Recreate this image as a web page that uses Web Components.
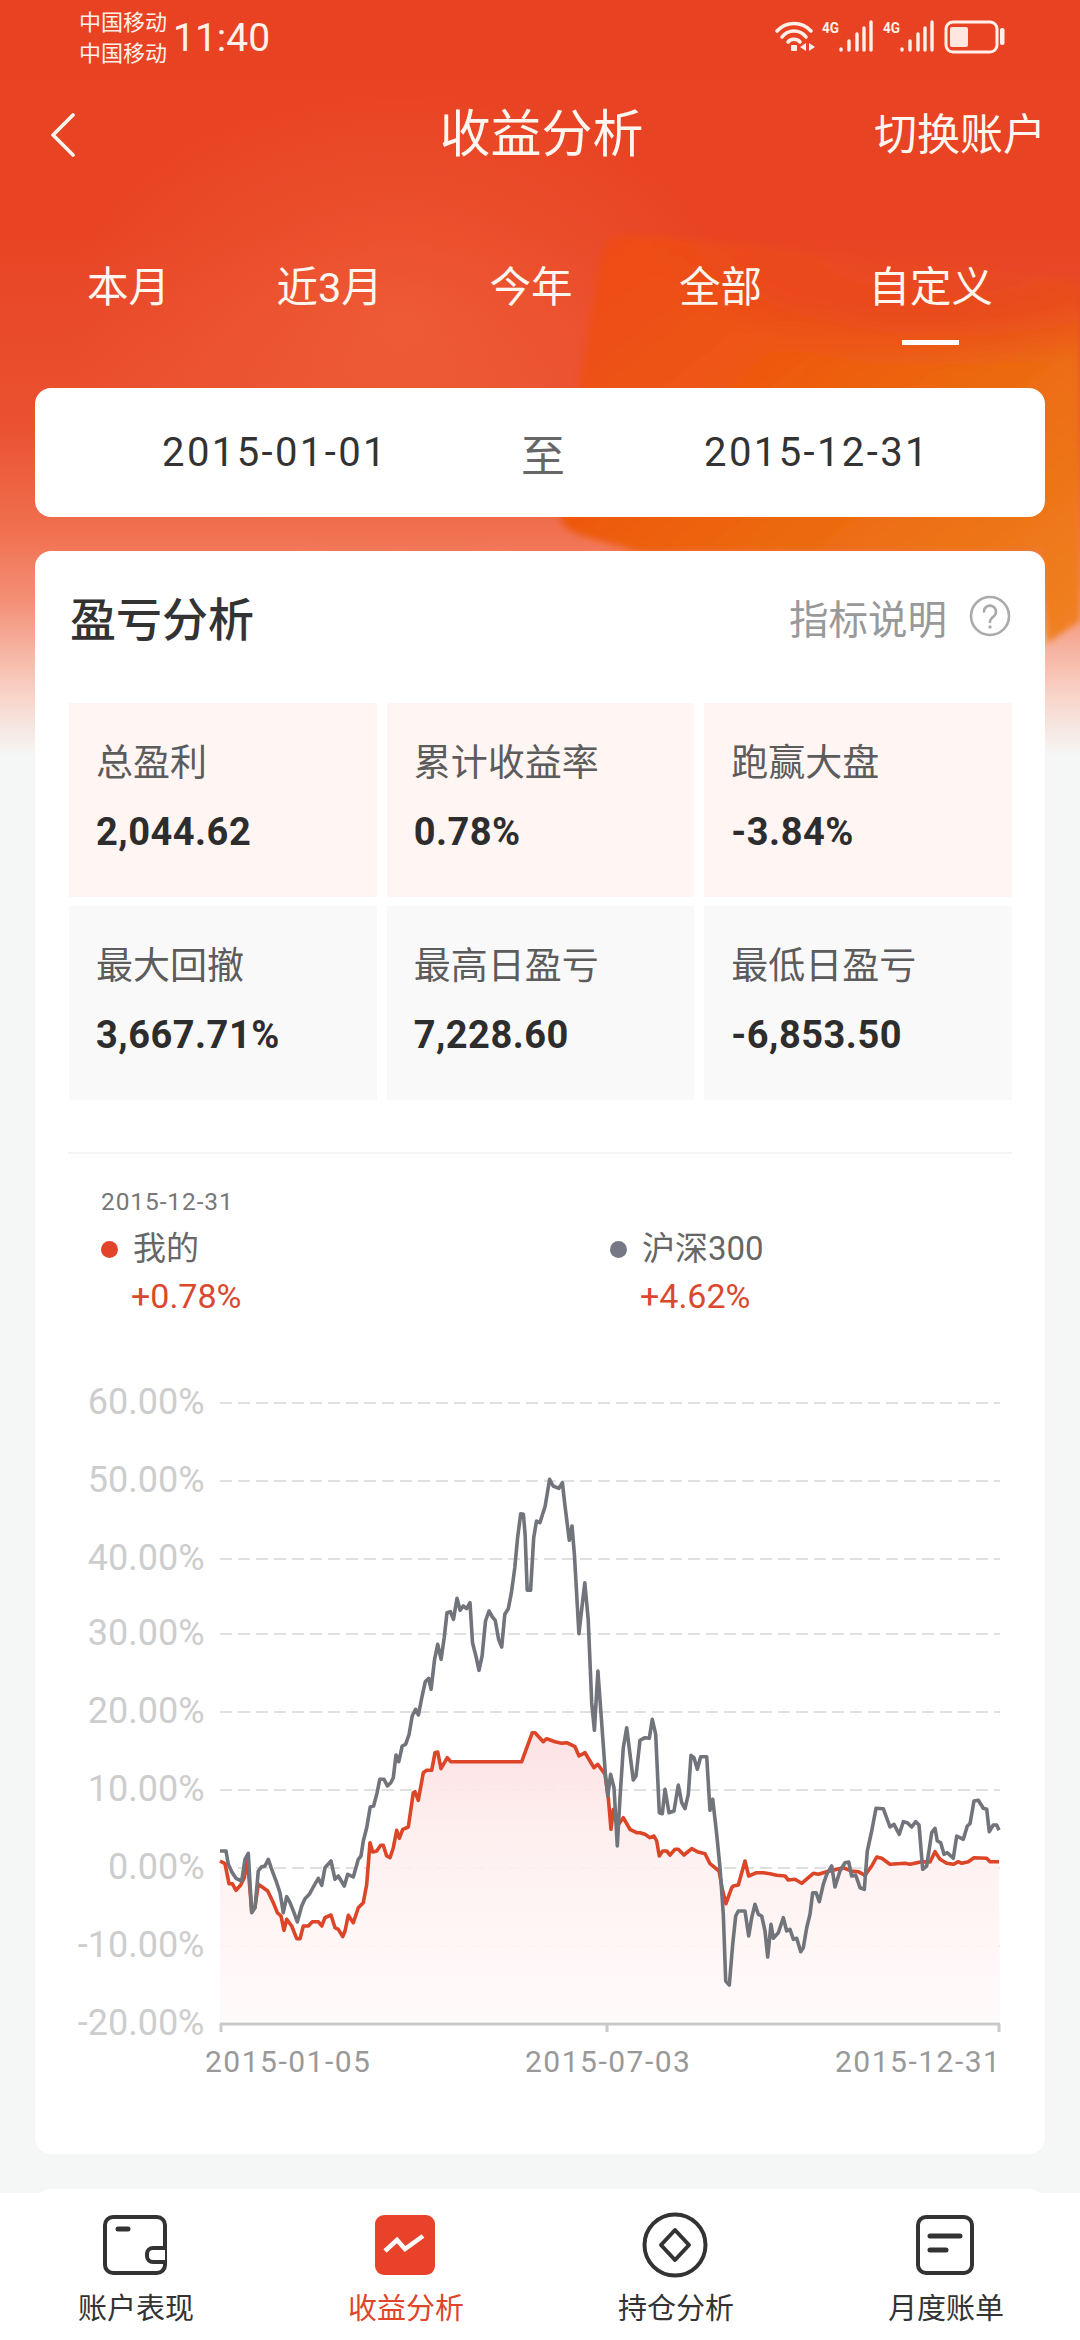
<!DOCTYPE html>
<html lang="zh-CN">
<head>
<meta charset="utf-8">
<title>收益分析</title>
<style>
html,body{margin:0;padding:0;background:#f5f6f6}
body{font-family:Roboto,"Noto Sans CJK SC",sans-serif;color:#333}
</style>
</head>
<body>
<app-page>
  <hero-backdrop slot="backdrop"></hero-backdrop>
  <status-bar></status-bar>
  <nav-bar title-text="收益分析" action="切换账户"></nav-bar>
  <range-tabs></range-tabs>
  <date-range from="2015-01-01" to="2015-12-31"></date-range>
  <analysis-card>
    <stat-grid></stat-grid>
    <chart-legend></chart-legend>
    <profit-chart></profit-chart>
  </analysis-card>
  <next-card></next-card>
  <tab-bar slot="footer"></tab-bar>
</app-page>

<script>
function shadow(el, html){ el.attachShadow({mode:'open'}).innerHTML = html; }

customElements.define('app-page', class extends HTMLElement{
  constructor(){ super(); shadow(this,`<style>
    :host{display:flex;flex-direction:column;position:relative;width:1080px;height:2340px;overflow:hidden;background:#f5f6f6}
    .content{position:relative;flex:1;min-height:0;overflow:hidden;display:flex;flex-direction:column}
    .footer{position:relative;flex:none}
  </style>
  <slot name="backdrop"></slot>
  <div class="content"><slot></slot></div>
  <div class="footer"><slot name="footer"></slot></div>`); }
});

customElements.define('hero-backdrop', class extends HTMLElement{
  constructor(){ super(); shadow(this,`<style>
    :host{display:block;position:absolute;left:0;top:0;width:1080px;height:770px}
    svg{display:block}
  </style>
  <svg width="1080" height="770" viewBox="0 0 1080 770">
    <defs>
      <linearGradient id="base" x1="0" y1="0" x2="0" y2="1">
        <stop offset="0" stop-color="#e84223"/>
        <stop offset=".3" stop-color="#e84424"/>
        <stop offset=".55" stop-color="#ea5130"/>
        <stop offset=".69" stop-color="#f0704f"/>
        <stop offset=".78" stop-color="#f48f76"/>
        <stop offset=".9" stop-color="#f8d2c6"/>
        <stop offset=".98" stop-color="#f5f6f6"/>
        <stop offset="1" stop-color="#f5f6f6"/>
      </linearGradient>
      <linearGradient id="or" x1="0" y1="0" x2="1" y2="1">
        <stop offset="0" stop-color="#ee4a18"/>
        <stop offset=".3" stop-color="#ee5412"/>
        <stop offset=".6" stop-color="#ec6a10"/>
        <stop offset="1" stop-color="#f08222"/>
      </linearGradient>
      <radialGradient id="glow" cx=".5" cy=".5" r=".5">
        <stop offset="0" stop-color="#f36a42" stop-opacity=".5"/>
        <stop offset="1" stop-color="#f36a42" stop-opacity="0"/>
      </radialGradient>
      <radialGradient id="redfade" cx=".5" cy=".5" r=".5">
        <stop offset="0" stop-color="#e84424" stop-opacity=".95"/>
        <stop offset=".6" stop-color="#e84424" stop-opacity=".7"/>
        <stop offset="1" stop-color="#e84424" stop-opacity="0"/>
      </radialGradient>
      <filter id="soft" x="-5%" y="-5%" width="110%" height="110%"><feGaussianBlur stdDeviation="3"/></filter>
      <clipPath id="shape"><path d="M628 235Q606 233 600 262L560 505Q554 530 590 538L640 552H1040L1047 643L1080 621V282L757 246Z"/></clipPath>
    </defs>
    <rect width="1080" height="770" fill="url(#base)"/>
    <ellipse cx="400" cy="320" rx="330" ry="240" fill="url(#glow)"/>
    <g filter="url(#soft)">
      <path d="M628 235Q606 233 600 262L560 505Q554 530 590 538L640 552H1040L1047 643L1080 621V282L757 246Z" fill="url(#or)"/>
      <g clip-path="url(#shape)"><ellipse cx="960" cy="240" rx="320" ry="130" fill="url(#redfade)"/></g>
    </g>
  </svg>`); }
});

customElements.define('status-bar', class extends HTMLElement{
  constructor(){ super(); shadow(this,`<style>
    :host{display:flex;align-items:center;height:76px;padding-left:79px;color:#fff1ea;flex:none}
    .carrier{display:flex;flex-direction:column;font-size:22px;line-height:31px;padding-bottom:5px;font-family:"Noto Sans CJK SC",sans-serif}
    .time{font-size:39px;margin-left:6px;font-family:Roboto,sans-serif;line-height:44px}
    svg{margin-left:auto;margin-right:67px;display:block}
    text{font:700 14px Roboto,sans-serif;fill:#fff1ea}
  </style>
  <div class="carrier"><span>中国移动</span><span>中国移动</span></div>
  <span class="time">11:40</span>
  <svg width="250" height="76" viewBox="760 0 250 76" fill="none" stroke="#fff1ea">
    <g stroke-width="3.6" stroke-linecap="round">
      <path d="M774 31A23 23 0 0 1 808 31"/>
      <path d="M779 37A15 15 0 0 1 803 37"/>
      <path d="M785 42A8 8 0 0 1 797 42"/>
    </g>
    <rect x="788" y="45" width="6" height="6" rx="1" fill="#fff1ea" stroke="none"/>
    <path d="M803 43V51L797 47ZM806 43V51L812 47Z" fill="#fff1ea" stroke="none"/>
    <text x="819" y="33" stroke="none" textLength="17" lengthAdjust="spacingAndGlyphs">4G</text>
    <g stroke-width="3.4" stroke-linecap="round">
      <path d="M838 50V49M846 50V41M854 50V34M861 50V28M868 50V22"/>
    </g>
    <text x="880" y="33" stroke="none" textLength="17" lengthAdjust="spacingAndGlyphs">4G</text>
    <g stroke-width="3.4" stroke-linecap="round">
      <path d="M899 50V49M907 50V41M915 50V34M922 50V28M929 50V22"/>
    </g>
    <rect x="943" y="22" width="51" height="30" rx="7" stroke-width="3"/>
    <rect x="947" y="27" width="18" height="20" rx="2" fill="#ffe6de" stroke="none"/>
    <rect x="997" y="28" width="4.5" height="17" rx="2" fill="#fff1ea" stroke="none"/>
  </svg>`); }
});

customElements.define('nav-bar', class extends HTMLElement{
  constructor(){ super(); shadow(this,`<style>
    :host{display:grid;grid-template-columns:1fr auto 1fr;align-items:center;height:116px;padding:2px 34px 0 37px;box-sizing:border-box;color:#fff;flex:none}
    .t{font-size:51px;font-weight:400;line-height:60px;color:#fff6f0}
    .a{justify-self:end;font-size:43px;line-height:56px;color:#fff6f0}
    svg{display:block;margin-left:13px}
  </style>
  <svg width="26" height="44" viewBox="0 0 26 44" fill="none" stroke="#fff6f0" stroke-width="3.6" stroke-linecap="round" stroke-linejoin="round"><path d="M23 2L3 22L23 42"/></svg>
  <div class="t"></div><div class="a"></div>`);
    this.shadowRoot.querySelector('.t').textContent=this.getAttribute('title-text');
    this.shadowRoot.querySelector('.a').textContent=this.getAttribute('action');
  }
});

customElements.define('range-tabs', class extends HTMLElement{
  constructor(){ super();
    const items=['本月','近3月','今年','全部','自定义'];
    shadow(this,`<style>
      :host{display:flex;justify-content:space-between;margin-top:68px;padding:0 87px;flex:none;color:#fff6f0}
      .i{display:flex;flex-direction:column;align-items:center;font-size:41.5px;line-height:56px}
      .b{width:57px;height:5px;margin-top:24px;background:transparent}
      .on .b{background:#fff}
    </style>`+items.map((t,i)=>`<div class="i ${i==4?'on':''}"><span>${t}</span><span class="b"></span></div>`).join(''));
  }
});

customElements.define('date-range', class extends HTMLElement{
  constructor(){ super(); shadow(this,`<style>
    :host{display:flex;align-items:center;gap:140px;flex:none;box-sizing:border-box;margin:43px 35px 0;height:129px;padding-left:127px;background:#fff;border-radius:16px}
    .d{font-size:40px;letter-spacing:2.4px;color:#333;width:220px;white-space:nowrap;font-family:Roboto,sans-serif}
    .z{font-size:44px;color:#666;font-family:"Noto Sans CJK SC",sans-serif;margin-left:-1px;margin-right:-1px}
  </style><span class="d">${this.getAttribute('from')}</span><span class="z">至</span><span class="d">${this.getAttribute('to')}</span>`); }
});

customElements.define('analysis-card', class extends HTMLElement{
  constructor(){ super(); shadow(this,`<style>
    :host{display:block;flex:none;margin:34px 35px 0;height:1603px;background:#fff;border-radius:16px}
    .h{display:flex;align-items:center;height:50px;padding:40px 34px 0 35px}
    .t{font-size:46px;font-weight:500;color:#333}
    .e{margin-left:auto;display:flex;align-items:center;font-size:39.5px;color:#999}
    svg{display:block;margin-left:22px}
  </style>
  <div class="h"><span class="t">盈亏分析</span><span class="e">指标说明<svg width="42" height="42" viewBox="0 0 42 42" fill="none" stroke="#aaa" stroke-width="2.6"><circle cx="21" cy="21" r="19"/><path d="M15 16.5a6 6 0 1 1 9.5 5c-2.400 1.800-3.500 2.700-3.500 5.500" stroke-linecap="round"/><circle cx="21" cy="32" r="1.700" fill="#aaa" stroke="none"/></svg></span></div>
  <slot></slot>`); }
});

customElements.define('stat-cell', class extends HTMLElement{
  constructor(){ super(); shadow(this,`<style>
    :host{display:block;box-sizing:border-box;padding:40px 0 0 27px;background:var(--cell,#fff5f3)}
    .l{font-size:37px;line-height:42px;color:#5c5c5c}
    .v{font-size:38px;line-height:44px;margin-top:25px;font-weight:700;color:#2d2d2d;letter-spacing:.5px;font-family:Roboto,sans-serif}
  </style><div class="l">${this.getAttribute('label')}</div><div class="v">${this.getAttribute('value')}</div>`); }
});

customElements.define('stat-grid', class extends HTMLElement{
  constructor(){ super();
    const d=[['总盈利','2,044.62'],['累计收益率','0.78%'],['跑赢大盘','-3.84%'],['最大回撤','3,667.71%'],['最高日盈亏','7,228.60'],['最低日盈亏','-6,853.50']];
    shadow(this,`<style>
      :host{display:grid;grid-template-columns:repeat(3,1fr);grid-auto-rows:194px;gap:9px 10px;margin:62px 33px 0 34px}
      .g{--cell:#f9f9f9}
    </style>`+d.map((r,i)=>`<stat-cell class="${i>2?'g':''}" label="${r[0]}" value="${r[1]}"></stat-cell>`).join(''));
  }
});

customElements.define('chart-legend', class extends HTMLElement{
  constructor(){ super(); shadow(this,`<style>
    :host{display:block;margin:52px 33px 0 33px;border-top:2px solid #f5f5f5;padding:33px 0 0 33px}
    .d{font-size:24.500px;line-height:30px;color:#777;letter-spacing:.9px}
    .r{display:flex;margin-top:12px}
    .c{flex:none;width:509px}
    .n{display:flex;align-items:center;font-size:33px;line-height:40px;color:#666}
    .dot{width:17px;height:17px;border-radius:50%;margin-right:15px;background:#e2432a}
    .gy{background:#767985}
    .v{margin:7px 0 0 30px;font-size:34px;line-height:40px;color:#d9492e}
  </style>
  <div class="d">2015-12-31</div>
  <div class="r">
    <div class="c"><div class="n"><span class="dot"></span>我的</div><div class="v">+0.78%</div></div>
    <div class="c"><div class="n"><span class="dot gy"></span>沪深300</div><div class="v">+4.62%</div></div>
  </div>`); }
});

customElements.define('profit-chart', class extends HTMLElement{
  constructor(){ super();
    const z8=a=>a.map(p=>[200+p[0]/3,1700+p[1]/3]);
    const z9=a=>a.map(p=>[610+p[0]/3,1700+p[1]/3]);
    const z3=a=>a.map(p=>[p[0]/2.904,1340+p[1]/3]);
    const z4=a=>a.map(p=>[540+p[0]/2.904,1340+p[1]/3]);
    const P=s=>s.trim().split(/;\s*/).filter(Boolean).map(q=>q.split(',').map(Number));
    const grey=[].concat(
      z8(P(`60,450;78,450;85,490;95,512;108,532;125,540;135,475;145,457;155,635;165,620;175,510;185,497;195,495;205,475;215,505;230,545;240,575;250,635;260,587;270,605;282,635;292,663;305,615;315,593;328,580;340,558;355,532;365,553;375,500;393,480;405,535;415,525;433,555;443,520;460,528;475,475;483,465`)),
      z3(P(`1055,1500;1065,1460;1075,1398;1085,1395;1095,1355;1103,1315;1115,1315;1125,1335;1135,1325;1142,1310;1150,1242;1158,1262;1168,1215;1178,1210;1188,1180;1197,1125;1207,1105;1215,1122;1225,1070;1235,1022;1245,1012;1252,1045;1262,955;1271,910;1281,955;1290,890;1298,815;1308,812;1317,835;1327,772;1336,808;1345,795;1355,803;1365,785;1372,905;1382,945;1391,988;1400,945;1410,840;1420,810;1430,828;1438,838;1448,895;1457,918;1466,820;1476,803;1485,755;1495,680;1503,590;1512,518;1520,520;1525,580;1531,748;1541,748;1550,590;1558,540;1568,545`)),
      z4(P(`15,495;28,415;38,435;55,442;65,425;72,490;85,598;93,555;100,640;113,878;130,725;140,835;150,1085;158,1168;168,990;178,1130;190,1300;197,1365;205,1300;215,1340`)),
      z9(P(`22,435;30,290;40,140;50,80;60,160;70,237;78,225;90,118;105,110;118,112;127,55;137,100;148,335;157,338;165,265;177,335;192,330;205,252;215,305;225,323;235,280;243,163;252,170;262,205;272,167;290,167;300,328;308,295;320,400;330,500;340,640;347,840;358,852;368,730;377,645;385,630;405,630;416,705;425,650;435,610;445,640;455,645;465,690;473,768;483,670;490,712;505,695;520,650;530,690;540,685;550,715;560,712;572,752;580,740;590,680;600,640;608,575;618,575;628,602;640,550;650,520;665,495;675,558;690,510;705,485;716,483;725,525;737,522;750,560;763,565;772,450;785,390;798,322;820,323;840,378;852,370;868,400;880,362;892,365;905,378;917,362;927,372;938,505;950,495;965,395;975,382;982,420;992,425;1002,460;1012,455;1030,472;1040,405;1060,415;1072,375;1080,368;1092,300;1105,298;1120,322;1130,325;1138,392;1150,372;1160,372;1167,388`))
    );
    const red=[].concat(
      z8(P(`60,480;75,488;87,548;97,548;108,568;122,552;133,530;142,470;155,630;165,618;175,550;190,560;203,570;220,605;232,635;243,645;252,688;260,655;275,675;290,713;300,713;310,675;325,675;337,662;355,662;365,675;375,650;393,642;405,680;415,685;428,707;435,690;445,643;460,665;475,620;490,605;500,550;510,425;518,453;530,450;542,433;550,433;560,465;570,470;580,440;590,388;598,412;608,385;625,378;640,275;645,272;655,298;670,215;680,208;695,208;705,155;713,153;723,203;742,170;752,182;965,182;997,95;1005,95;1030,122;1040,113;1065,122;1085,127;1100,125;1125,137;1137,165;1155,155;1182,200;1193,190;1215,220;1225,290;1233,385;1240,325;1252,375;1270,350;1290,385;1310,395`)),
      z9(P(`90,395;105,400;120,410;132,405;140,420;148,465;158,450;170,450;180,462;195,445;205,445;222,462;245,443;262,452;285,458;300,488;327,510;338,570;348,608;365,560;370,555;385,552;405,480;416,525;440,515;460,515;480,518;500,523;525,525;535,537;555,535;575,547;610,517;625,520;650,512;700,500;725,510;745,512;765,523;785,495;800,468;815,472;840,490;885,487;900,490;935,482;960,483;975,452;990,475;1010,487;1030,490;1045,482;1055,487;1075,482;1092,470;1130,472;1140,482;1167,482`))
    );
    const pts=a=>a.map(p=>p[0].toFixed(1)+','+p[1].toFixed(1)).join(' ');
    const grids=[[1402,'60.00%'],[1480,'50.00%'],[1558,'40.00%'],[1633,'30.00%'],[1711,'20.00%'],[1789,'10.00%'],[1867,'0.00%'],[1945,'-10.00%'],[2023,'-20.00%']];
    const gl=grids.slice(0,-1).map(g=>`<line x1="220" x2="1000" y1="${g[0]}" y2="${g[0]}" stroke="#e0e0e0" stroke-width="2.200" stroke-dasharray="12 6"/>`).join('');
    const yl=grids.map(g=>`<text class="y" x="204.500" y="${g[0]+11}" text-anchor="end">${g[1]}</text>`).join('');
    shadow(this,`<style>
      :host{display:block;margin-top:25px;height:770px}
      svg{display:block}
      text{font-family:Roboto,sans-serif}
      .y{font-size:36px;fill:#cdcdcd}
      .x{font-size:30px;fill:#999;letter-spacing:1.500px}
    </style>
    <svg width="1010" height="770" viewBox="35 1340 1010 770" fill="none">
      <defs><linearGradient id="f" x1="0" y1="0" x2="0" y2="1">
        <stop offset="0" stop-color="#fcdfe1"/><stop offset=".35" stop-color="#feeeee"/><stop offset=".7" stop-color="#fff5f5"/><stop offset="1" stop-color="#fffafa"/>
      </linearGradient></defs>
      ${gl}${yl}
      <polygon points="${pts(red)} 1000,2020 220,2020" fill="url(#f)" opacity=".92"/>
      <polyline points="${pts(red)}" stroke="#dc4527" stroke-width="3.600" stroke-linejoin="round"/>
      <polyline points="${pts(grey)}" stroke="#71747b" stroke-width="3.600" stroke-linejoin="round"/>
      <path d="M220 2023H1000M221 2023V2031M607 2023V2031M999 2023V2031" stroke="#c9c9c9" stroke-width="3"/>
      <text class="x" x="205" y="2071">2015-01-05</text>
      <text class="x" x="525" y="2071">2015-07-03</text>
      <text class="x" x="835" y="2071">2015-12-31</text>
    </svg>`);
  }
});

customElements.define('next-card', class extends HTMLElement{
  constructor(){ super(); shadow(this,`<style>
    :host{display:block;flex:none;margin:35px 35px 0;height:200px;background:#fff;border-radius:16px}
  </style>`); }
});

customElements.define('tab-item', class extends HTMLElement{
  constructor(){ super(); shadow(this,`<style>
    :host{display:flex;flex-direction:column;align-items:center;padding-top:17px;font-size:29px;color:#333}
    :host([active]){color:#e0452a}
    .i{height:70px;display:flex;align-items:center;justify-content:center}
    .l{margin-top:8px;line-height:36px;font-family:"Noto Sans CJK SC",sans-serif;padding-left:2px}
  </style><div class="i"><slot name="icon"></slot></div><div class="l"><slot></slot></div>`); }
});

customElements.define('tab-bar', class extends HTMLElement{
  constructor(){ super(); shadow(this,`<style>
    :host{display:grid;grid-template-columns:repeat(4,270px);height:147px;background:#fff}
    svg{display:block}
  </style>
  <tab-item>
    <svg slot="icon" width="64" height="60" viewBox="0 0 64 60" fill="none" stroke="#333" stroke-width="4">
      <rect x="2" y="2" width="60" height="56" rx="8"/>
      <path d="M15 14H25" stroke-width="5" stroke-linecap="round"/>
      <path d="M62 33H50a6 6 0 0 0-6 6v2a6 6 0 0 0 6 6H62" fill="#fff"/>
    </svg>账户表现</tab-item>
  <tab-item active>
    <svg slot="icon" width="60" height="60" viewBox="0 0 60 60">
      <rect width="60" height="60" rx="9" fill="#e8432a"/>
      <path d="M10 36L22 25L30 34L48 21" fill="none" stroke="#fff" stroke-width="4.600" stroke-linejoin="miter"/>
    </svg>收益分析</tab-item>
  <tab-item>
    <svg slot="icon" width="66" height="66" viewBox="0 0 66 66" fill="none" stroke="#333" stroke-width="4">
      <circle cx="33" cy="33" r="30.500"/>
      <path d="M33 18L47 33L33 48L19 33Z" stroke-linejoin="round"/>
    </svg>持仓分析</tab-item>
  <tab-item>
    <svg slot="icon" width="58" height="60" viewBox="0 0 58 60" fill="none" stroke="#333" stroke-width="4">
      <rect x="2" y="2" width="54" height="56" rx="8"/>
      <path d="M14 21H44M14 35H30" stroke-width="5" stroke-linecap="round"/>
    </svg>月度账单</tab-item>`); }
});
</script>
</body>
</html>
